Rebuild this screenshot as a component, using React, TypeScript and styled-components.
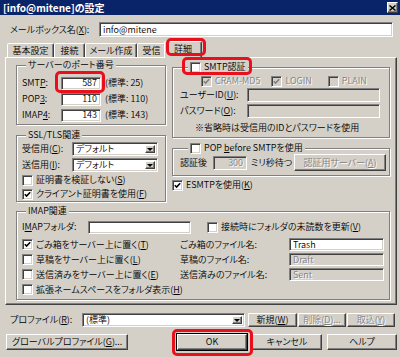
import styled, { createGlobalStyle, css } from "styled-components";

const FACE = "#d4d0c8";

const Global = createGlobalStyle`
  html, body { margin: 0; padding: 0; background: ${FACE}; }
  body {
    font-family: "Noto Sans CJK JP", "Noto Sans", sans-serif;
    font-size: 9px;
    line-height: 12px;
    color: #000;
  }
  * { box-sizing: border-box; }
  u { text-underline-offset: 1px; }
`;

const raised = css`
  border: 1px solid;
  border-color: #fff #404040 #404040 #fff;
  box-shadow: inset -1px -1px #808080;
`;

const sunken = css`
  border: 1px solid;
  border-color: #808080 #fff #fff #808080;
  box-shadow: inset 1px 1px #404040, inset -1px -1px ${FACE};
`;

const dimText = css`
  color: #808080;
  text-shadow: 1px 1px #fff;
`;

const Window = styled.div`
  width: 400px;
  height: 357px;
  overflow: hidden;
  background: ${FACE};
  font-feature-settings: "palt" 1;
  font-weight: 350;
`;

const TitleBar = styled.div`
  height: 15px;
  background: #0a246a;
  color: #fff;
  font-weight: bold;
  font-size: 10px;
  display: flex;
  align-items: center;
  justify-content: space-between;
  padding: 0 2px 0 3px;
`;

const CloseBtn = styled.div`
  width: 11px;
  height: 11px;
  background: ${FACE};
  ${raised};
  display: grid;
  place-items: center;
`;

const Body = styled.div`
  padding: 0 3px 0 5px;
`;

const Row = styled.div<{ h?: number; mt?: number; ml?: number; gap?: number }>`
  display: flex;
  align-items: center;
  height: ${(p) => p.h ?? 12}px;
  margin-top: ${(p) => p.mt ?? 0}px;
  margin-left: ${(p) => p.ml ?? 0}px;
  gap: ${(p) => p.gap ?? 0}px;
  white-space: nowrap;
`;

const Label = styled.span<{ w?: number; pl?: number; dim?: boolean }>`
  display: inline-block;
  flex: none;
  width: ${(p) => (p.w ? `${p.w}px` : "auto")};
  padding-left: ${(p) => p.pl ?? 0}px;
  white-space: nowrap;
  ${(p) => p.dim && dimText};
`;

const Field = styled.div<{ w: number; h?: number; right?: boolean; off?: boolean }>`
  flex: none;
  width: ${(p) => p.w}px;
  height: ${(p) => p.h ?? 14}px;
  ${sunken};
  background: ${(p) => (p.off ? FACE : "#fff")};
  display: flex;
  align-items: center;
  justify-content: ${(p) => (p.right ? "flex-end" : "flex-start")};
  padding: 0 3px;
  white-space: nowrap;
  ${(p) => p.off && dimText};
`;

const ComboBox = styled.div<{ w: number; h?: number }>`
  flex: none;
  width: ${(p) => p.w}px;
  height: ${(p) => p.h ?? 14}px;
  ${sunken};
  background: #fff;
  display: flex;
  align-items: center;
  justify-content: space-between;
  padding: 2px 2px 2px 3px;
`;

const DropBtn = styled.span`
  width: 10px;
  height: 100%;
  background: ${FACE};
  ${raised};
  display: grid;
  place-items: center;
`;

const Arrow = styled.span`
  width: 0;
  height: 0;
  border-left: 3px solid transparent;
  border-right: 3px solid transparent;
  border-top: 3px solid #000;
`;

const Button = styled.div<{ w: number; h?: number; off?: boolean; primary?: boolean }>`
  flex: none;
  width: ${(p) => p.w}px;
  height: ${(p) => p.h ?? 14}px;
  background: ${FACE};
  ${raised};
  display: flex;
  align-items: center;
  justify-content: center;
  white-space: nowrap;
  ${(p) => p.off && dimText};
  ${(p) =>
    p.primary &&
    css`
      outline: 1px solid #000;
      outline-offset: 0;
    `};
`;

const TabStrip = styled.div`
  display: flex;
  align-items: flex-end;
  height: 17px;
  margin-top: 3px;
  padding-left: 2px;
  position: relative;
  z-index: 1;
`;

const Tab = styled.div<{ w: number; active?: boolean }>`
  width: ${(p) => p.w}px;
  height: ${(p) => (p.active ? 17 : 14)}px;
  margin: ${(p) => (p.active ? "0 -2px -1px" : "0")};
  background: ${FACE};
  border: 1px solid;
  border-bottom: none;
  border-color: #fff #404040 transparent #fff;
  box-shadow: inset -1px 0 #808080;
  border-radius: 2px 2px 0 0;
  display: flex;
  align-items: center;
  justify-content: center;
  padding-bottom: ${(p) => (p.active ? 2 : 0)}px;
  position: relative;
  z-index: ${(p) => (p.active ? 2 : 0)};
`;

const Panel = styled.div`
  width: 392px;
  height: 248px;
  ${raised};
  padding: 0 6px 0 10px;
`;

const Top = styled.div`
  display: grid;
  grid-template-columns: 150px 218px;
  column-gap: 6px;
  align-items: start;
  height: 146px;
`;

const Column = styled.div<{ pt: number }>`
  padding-top: ${(p) => p.pt}px;
`;

const Group = styled.div<{ mt: number; pad: string }>`
  margin-top: ${(p) => p.mt}px;
  border: 1px solid #808080;
  box-shadow: inset 1px 1px #fff, 1px 1px #fff;
  padding: ${(p) => p.pad};
`;

const Legend = styled.div<{ indent: number; lift?: number }>`
  display: flex;
  align-items: center;
  gap: 3px;
  width: fit-content;
  height: 12px;
  margin: ${(p) => -7 - (p.lift ?? 0)}px 0 0 ${(p) => p.indent}px;
  padding: 0 2px;
  background: ${FACE};
  white-space: nowrap;
`;

const Box = styled.span<{ off?: boolean }>`
  flex: none;
  width: 11px;
  height: 11px;
  ${sunken};
  background: ${(p) => (p.off ? FACE : "#fff")};
  display: grid;
  place-items: center;
`;

const ImapGrid = styled.div`
  display: grid;
  grid-template-columns: 158px 109px 95px;
  grid-auto-rows: 15px;
  align-items: center;
  margin-top: 3px;
`;

const Mark = styled.span<{ t: number; r: number; b: number; l: number }>`
  position: relative;
  display: inline-flex;
  &::after {
    content: "";
    position: absolute;
    top: ${(p) => -p.t}px;
    right: ${(p) => -p.r}px;
    bottom: ${(p) => -p.b}px;
    left: ${(p) => -p.l}px;
    border: 3px solid #e8101c;
    border-radius: 5px;
    pointer-events: none;
    z-index: 5;
  }
`;

const BottomBar = styled.div`
  display: flex;
  align-items: center;
  gap: 5px;
  height: 17px;
  margin-top: 6px;
  padding-left: 1px;
`;

const Spacer = styled.div`
  flex: 1;
`;

function Check({ on, off }: { on?: boolean; off?: boolean }) {
  return (
    <Box off={off}>
      {on && (
        <svg width="7" height="7" viewBox="0 0 7 7">
          <path
            d="M0.8 3.2 L2.6 5 L6.2 1.2"
            fill="none"
            stroke={off ? "#808080" : "#000"}
            strokeWidth="1.6"
          />
        </svg>
      )}
    </Box>
  );
}

function CheckItem({
  on,
  off,
  children,
}: {
  on?: boolean;
  off?: boolean;
  children: React.ReactNode;
}) {
  return (
    <Row gap={3}>
      <Check on={on} off={off} />
      <Label dim={off}>{children}</Label>
    </Row>
  );
}

function Combo({ w, h, value }: { w: number; h?: number; value: string }) {
  return (
    <ComboBox w={w} h={h}>
      <span>{value}</span>
      <DropBtn>
        <Arrow />
      </DropBtn>
    </ComboBox>
  );
}

export default function App() {
  return (
    <Window>
      <Global />
      <TitleBar>
        <span>[info@mitene]の設定</span>
        <CloseBtn>
          <svg width="7" height="6" viewBox="0 0 7 6">
            <path d="M0.5 0.5 L6.5 5.5 M6.5 0.5 L0.5 5.5" stroke="#000" strokeWidth="1.5" />
          </svg>
        </CloseBtn>
      </TitleBar>

      <Body>
        <Row h={15} mt={7}>
          <Label w={94} pl={5}>
            メールボックス名(<u>X</u>):
          </Label>
          <Field w={294} h={15}>
            info@mitene
          </Field>
        </Row>

        <TabStrip>
          <Tab w={47}>基本設定</Tab>
          <Tab w={31}>接続</Tab>
          <Tab w={52}>メール作成</Tab>
          <Tab w={29}>受信</Tab>
          <Mark t={3} r={6} b={-1} l={0}>
            <Tab w={38} active>
              詳細
            </Tab>
          </Mark>
        </TabStrip>

        <Panel>
          <Top>
            <Column pt={7}>
              <Group mt={0} pad="0 0 1px 5px">
                <Legend indent={4}>サーバーのポート番号</Legend>
                <Row h={16} mt={4}>
                  <Label w={39}>
                    SMT<u>P</u>:
                  </Label>
                  <Mark t={6} r={4} b={3} l={6}>
                    <Field w={40} h={13} right>
                      587
                    </Field>
                  </Mark>
                  <Label pl={4}>(標準: 25)</Label>
                </Row>
                <Row h={16}>
                  <Label w={39}>
                    POP<u>3</u>:
                  </Label>
                  <Field w={40} h={13} right>
                    110
                  </Field>
                  <Label pl={4}>(標準: 110)</Label>
                </Row>
                <Row h={16}>
                  <Label w={39}>
                    IMAP<u>4</u>:
                  </Label>
                  <Field w={40} h={13} right>
                    143
                  </Field>
                  <Label pl={4}>(標準: 143)</Label>
                </Row>
              </Group>

              <Group mt={10} pad="2px 0 0 5px">
                <Legend indent={4} lift={2}>
                  SSL/TLS関連
                </Legend>
                <Row h={16}>
                  <Label w={50}>
                    受信用(<u>C</u>):
                  </Label>
                  <Combo w={86} value="デフォルト" />
                </Row>
                <Row h={16}>
                  <Label w={50}>
                    送信用(<u>I</u>):
                  </Label>
                  <Combo w={86} value="デフォルト" />
                </Row>
                <Row h={14}>
                  <CheckItem>
                    証明書を検証しない(<u>S</u>)
                  </CheckItem>
                </Row>
                <Row h={14}>
                  <CheckItem on>
                    クライアント証明書を使用(<u>F</u>)
                  </CheckItem>
                </Row>
              </Group>
            </Column>

            <Column pt={9}>
              <Group mt={0} pad="0 0 2px 7px">
                <Legend indent={8}>
                  <Mark t={4} r={6} b={2} l={8}>
                    <Row gap={3}>
                      <Check />
                      <span>SMTP認証</span>
                    </Row>
                  </Mark>
                </Legend>
                <Row h={12} mt={2} ml={21}>
                  <CheckItem on off>
                    CRAM-MD5
                  </CheckItem>
                  <Row ml={11}>
                    <CheckItem on off>
                      LOGIN
                    </CheckItem>
                  </Row>
                  <Row ml={16}>
                    <CheckItem off>PLAIN</CheckItem>
                  </Row>
                </Row>
                <Row h={16}>
                  <Label w={67}>
                    ユーザーID(<u>U</u>):
                  </Label>
                  <Field w={133} off />
                </Row>
                <Row h={16}>
                  <Label w={67}>
                    パスワード(<u>O</u>):
                  </Label>
                  <Field w={133} off />
                </Row>
                <Row h={14} mt={2} ml={15}>
                  ※省略時は受信用のIDとパスワードを使用
                </Row>
              </Group>

              <Group mt={10} pad="2px 0 4px 7px">
                <Legend indent={8} lift={2}>
                  <Check />
                  <span>
                    POP <u>b</u>efore SMTPを使用
                  </span>
                </Legend>
                <Row h={17}>
                  <Label w={33}>認証後</Label>
                  <Field w={34} h={14} right off>
                    300
                  </Field>
                  <Label w={47} pl={4}>
                    ミリ秒待つ
                  </Label>
                  <Button w={92} h={17} off>
                    認証用サーバー(<u>A</u>)
                  </Button>
                </Row>
              </Group>

              <Row h={12} mt={3}>
                <CheckItem on>
                  ESMTPを使用(<u>K</u>)
                </CheckItem>
              </Row>
            </Column>
          </Top>

          <Group mt={7} pad="0 0 2px 5px">
            <Legend indent={4}>IMAP関連</Legend>
            <Row h={14} mt={3}>
              <Label w={66}>
                I<u>M</u>APフォルダ:
              </Label>
              <Field w={103} h={13} />
              <Row ml={16}>
                <CheckItem>
                  接続時にフォルダの未読数を更新(<u>V</u>)
                </CheckItem>
              </Row>
            </Row>
            <ImapGrid>
              <CheckItem on>
                ごみ箱をサーバー上に置く(<u>T</u>)
              </CheckItem>
              <Label>ごみ箱のファイル名:</Label>
              <Field w={95} h={13}>
                Trash
              </Field>
              <CheckItem>
                草稿をサーバー上に置く(<u>L</u>)
              </CheckItem>
              <Label>草稿のファイル名:</Label>
              <Field w={95} h={13} off>
                Draft
              </Field>
              <CheckItem>
                送信済みをサーバー上に置く(<u>E</u>)
              </CheckItem>
              <Label>送信済みのファイル名:</Label>
              <Field w={95} h={13} off>
                Sent
              </Field>
              <CheckItem>
                拡張ネームスペースをフォルダ表示(<u>H</u>)
              </CheckItem>
            </ImapGrid>
          </Group>
        </Panel>

        <Row h={14} mt={8}>
          <Label w={77} pl={5}>
            プロファイル(<u>R</u>):
          </Label>
          <Combo w={163} value="(標準)" />
          <Row ml={3} gap={1}>
            <Button w={49}>
              新規(<u>W</u>)
            </Button>
            <Button w={48} off>
              削除(<u>D</u>)...
            </Button>
            <Button w={48} off>
              取込(<u>Y</u>)
            </Button>
          </Row>
        </Row>

        <BottomBar>
          <Button w={122} h={16}>
            グローバルプロファイル(<u>G</u>)...
          </Button>
          <Spacer />
          <Mark t={5} r={6} b={6} l={5}>
            <Button w={70} h={16} primary>
              OK
            </Button>
          </Mark>
          <Button w={70} h={16}>
            キャンセル
          </Button>
          <Button w={70} h={16}>
            ヘルプ
          </Button>
        </BottomBar>
      </Body>
    </Window>
  );
}
